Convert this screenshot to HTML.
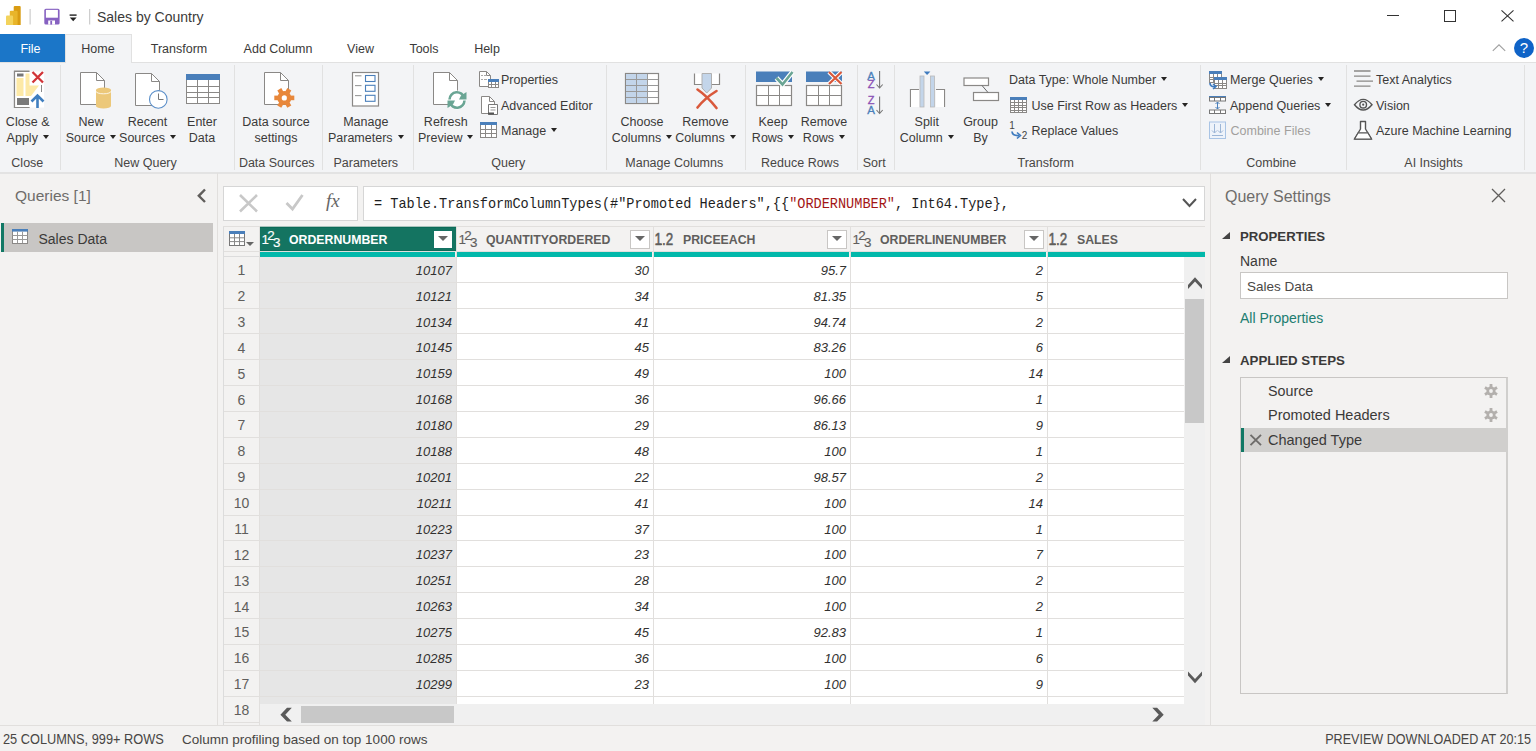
<!DOCTYPE html>
<html><head><meta charset="utf-8"><title>Power Query Editor</title>
<style>
html,body{margin:0;padding:0;width:1536px;height:751px;overflow:hidden;background:#fff;}
body{position:relative;font-family:"Liberation Sans",sans-serif;}
.t{position:absolute;white-space:nowrap;}
.b{position:absolute;display:block;}
.ar{display:inline-block;width:0;height:0;border-left:3.5px solid transparent;border-right:3.5px solid transparent;border-top:4px solid #252423;margin-left:5px;vertical-align:3px;}
</style></head><body>
<div class="b" style="left:0px;top:0px;width:1536px;height:34px;background:#ffffff;"></div>
<svg class="b" style="left:0;top:0" width="100" height="34" viewBox="0 0 100 34"><path d="M13.7 7Q13.7 5.9 14.8 5.9H19.6Q20.7 5.9 20.7 7V25H13.7Z" fill="#d99c12"/><path d="M9.8 11.8Q9.8 10.7 10.9 10.7H16.5Q17.6 10.7 17.6 11.8V25H9.8Z" fill="#e8b52a"/><path d="M6 16.7Q6 15.6 7.1 15.6H12Q13.1 15.6 13.1 16.7V25H6Z" fill="#f3d35c"/><rect x="29.6" y="9" width="1" height="15.5" fill="#c2c2c2"/><rect x="89.2" y="9" width="1" height="15.5" fill="#c2c2c2"/><rect x="44.3" y="8.8" width="15.3" height="15.8" rx="1.6" fill="#8661c1"/><rect x="45.9" y="9.9" width="12" height="7.8" fill="#fff"/><rect x="48.2" y="20.5" width="6.8" height="4.1" fill="#fff"/><rect x="50.3" y="20.8" width="1.8" height="3.8" fill="#8661c1"/><rect x="69.6" y="14.4" width="7" height="1.4" fill="#222"/><path d="M69.8 17.6H76.6L73.2 21.2Z" fill="#222"/></svg>
<div class="t" style="left:97px;top:10.15px;font-size:14px;line-height:14px;color:#3b3a39;font-weight:normal;font-style:normal;font-family:'Liberation Sans', sans-serif;">Sales by Country</div>
<div class="b" style="left:1387px;top:15px;width:12px;height:1px;background:#333;"></div>
<div class="b" style="left:1444px;top:10px;width:12px;height:12px;background:transparent;border:1px solid #333;box-sizing:border-box;"></div>
<svg class="b" style="left:1500px;top:9px;" width="15" height="14" viewBox="0 0 15 14"><path d="M1.5 1.4L13.5 12.4M13.5 1.4L1.5 12.4" stroke="#333" stroke-width="1.1"/></svg>
<div class="b" style="left:0px;top:34px;width:1536px;height:28px;background:#ffffff;"></div>
<div class="b" style="left:0px;top:34px;width:65px;height:28px;background:#1b76c8;"></div>
<div class="t" style="left:-221px;width:800px;text-align:center;top:42.72px;font-size:12.5px;line-height:12.5px;color:#3b3a39;font-weight:normal;font-style:normal;font-family:'Liberation Sans', sans-serif;">Transform</div>
<div class="t" style="left:-122px;width:800px;text-align:center;top:42.72px;font-size:12.5px;line-height:12.5px;color:#3b3a39;font-weight:normal;font-style:normal;font-family:'Liberation Sans', sans-serif;">Add Column</div>
<div class="t" style="left:-39.5px;width:800px;text-align:center;top:42.72px;font-size:12.5px;line-height:12.5px;color:#3b3a39;font-weight:normal;font-style:normal;font-family:'Liberation Sans', sans-serif;">View</div>
<div class="t" style="left:24px;width:800px;text-align:center;top:42.72px;font-size:12.5px;line-height:12.5px;color:#3b3a39;font-weight:normal;font-style:normal;font-family:'Liberation Sans', sans-serif;">Tools</div>
<div class="t" style="left:87px;width:800px;text-align:center;top:42.72px;font-size:12.5px;line-height:12.5px;color:#3b3a39;font-weight:normal;font-style:normal;font-family:'Liberation Sans', sans-serif;">Help</div>
<svg class="b" style="left:1491px;top:42px;" width="16" height="10" viewBox="0 0 16 10"><path d="M1.8 8.8L8 2.8L14.2 8.8" stroke="#a0a0a0" stroke-width="1.1" fill="none"/></svg>
<svg class="b" style="left:1513px;top:37px;" width="22" height="22" viewBox="0 0 22 22"><circle cx="11" cy="11" r="10" fill="#0f63c7"/><text x="11" y="16" text-anchor="middle" font-family="Liberation Sans" font-size="15" fill="#fff">?</text></svg>
<div class="b" style="left:0px;top:62px;width:1536px;height:1px;background:#e1e1e1;"></div>
<div class="b" style="left:0px;top:63px;width:1536px;height:110px;background:#f3f4f6;"></div>
<div class="b" style="left:65px;top:34px;width:67px;height:29px;background:#f3f4f6;border:1px solid #e1e1e1;border-bottom:none;box-sizing:border-box;"></div>
<div class="b" style="left:0px;top:34px;width:65px;height:28px;background:#1b76c8;"></div>
<div class="t" style="left:-369.5px;width:800px;text-align:center;top:42.72px;font-size:12.5px;line-height:12.5px;color:#ffffff;font-weight:normal;font-style:normal;font-family:'Liberation Sans', sans-serif;">File</div>
<div class="t" style="left:-302px;width:800px;text-align:center;top:42.72px;font-size:12.5px;line-height:12.5px;color:#3b3a39;font-weight:normal;font-style:normal;font-family:'Liberation Sans', sans-serif;">Home</div>
<div class="b" style="left:0px;top:172px;width:1536px;height:2px;background:#e3e3e3;"></div>
<div class="b" style="left:60px;top:65px;width:1px;height:105px;background:#e1e1e1;"></div>
<div class="b" style="left:234px;top:65px;width:1px;height:105px;background:#e1e1e1;"></div>
<div class="b" style="left:322px;top:65px;width:1px;height:105px;background:#e1e1e1;"></div>
<div class="b" style="left:413px;top:65px;width:1px;height:105px;background:#e1e1e1;"></div>
<div class="b" style="left:606px;top:65px;width:1px;height:105px;background:#e1e1e1;"></div>
<div class="b" style="left:745px;top:65px;width:1px;height:105px;background:#e1e1e1;"></div>
<div class="b" style="left:857px;top:65px;width:1px;height:105px;background:#e1e1e1;"></div>
<div class="b" style="left:894px;top:65px;width:1px;height:105px;background:#e1e1e1;"></div>
<div class="b" style="left:1200px;top:65px;width:1px;height:105px;background:#e1e1e1;"></div>
<div class="b" style="left:1346px;top:65px;width:1px;height:105px;background:#e1e1e1;"></div>
<div class="b" style="left:1524px;top:65px;width:1px;height:105px;background:#e1e1e1;"></div>
<div class="t" style="left:-372.25px;width:800px;text-align:center;top:115.62px;font-size:12.5px;line-height:12.5px;color:#3b3a39;font-weight:normal;font-style:normal;font-family:'Liberation Sans', sans-serif;">Close &amp;</div>
<div class="t" style="left:-372.25px;width:800px;text-align:center;top:132.32px;font-size:12.5px;line-height:12.5px;color:#3b3a39;font-weight:normal;font-style:normal;font-family:'Liberation Sans', sans-serif;">Apply<span class="ar"></span></div>
<div class="t" style="left:-309px;width:800px;text-align:center;top:115.62px;font-size:12.5px;line-height:12.5px;color:#3b3a39;font-weight:normal;font-style:normal;font-family:'Liberation Sans', sans-serif;">New</div>
<div class="t" style="left:-309px;width:800px;text-align:center;top:132.32px;font-size:12.5px;line-height:12.5px;color:#3b3a39;font-weight:normal;font-style:normal;font-family:'Liberation Sans', sans-serif;">Source<span class="ar"></span></div>
<div class="t" style="left:-252.5px;width:800px;text-align:center;top:115.62px;font-size:12.5px;line-height:12.5px;color:#3b3a39;font-weight:normal;font-style:normal;font-family:'Liberation Sans', sans-serif;">Recent</div>
<div class="t" style="left:-252.5px;width:800px;text-align:center;top:132.32px;font-size:12.5px;line-height:12.5px;color:#3b3a39;font-weight:normal;font-style:normal;font-family:'Liberation Sans', sans-serif;">Sources<span class="ar"></span></div>
<div class="t" style="left:-198px;width:800px;text-align:center;top:115.62px;font-size:12.5px;line-height:12.5px;color:#3b3a39;font-weight:normal;font-style:normal;font-family:'Liberation Sans', sans-serif;">Enter</div>
<div class="t" style="left:-198px;width:800px;text-align:center;top:132.32px;font-size:12.5px;line-height:12.5px;color:#3b3a39;font-weight:normal;font-style:normal;font-family:'Liberation Sans', sans-serif;">Data</div>
<div class="t" style="left:-124px;width:800px;text-align:center;top:115.62px;font-size:12.5px;line-height:12.5px;color:#3b3a39;font-weight:normal;font-style:normal;font-family:'Liberation Sans', sans-serif;">Data source</div>
<div class="t" style="left:-124px;width:800px;text-align:center;top:132.32px;font-size:12.5px;line-height:12.5px;color:#3b3a39;font-weight:normal;font-style:normal;font-family:'Liberation Sans', sans-serif;">settings</div>
<div class="t" style="left:-34.25px;width:800px;text-align:center;top:115.62px;font-size:12.5px;line-height:12.5px;color:#3b3a39;font-weight:normal;font-style:normal;font-family:'Liberation Sans', sans-serif;">Manage</div>
<div class="t" style="left:-34.25px;width:800px;text-align:center;top:132.32px;font-size:12.5px;line-height:12.5px;color:#3b3a39;font-weight:normal;font-style:normal;font-family:'Liberation Sans', sans-serif;">Parameters<span class="ar"></span></div>
<div class="t" style="left:45.75px;width:800px;text-align:center;top:115.62px;font-size:12.5px;line-height:12.5px;color:#3b3a39;font-weight:normal;font-style:normal;font-family:'Liberation Sans', sans-serif;">Refresh</div>
<div class="t" style="left:45.75px;width:800px;text-align:center;top:132.32px;font-size:12.5px;line-height:12.5px;color:#3b3a39;font-weight:normal;font-style:normal;font-family:'Liberation Sans', sans-serif;">Preview<span class="ar"></span></div>
<div class="t" style="left:242px;width:800px;text-align:center;top:115.62px;font-size:12.5px;line-height:12.5px;color:#3b3a39;font-weight:normal;font-style:normal;font-family:'Liberation Sans', sans-serif;">Choose</div>
<div class="t" style="left:242px;width:800px;text-align:center;top:132.32px;font-size:12.5px;line-height:12.5px;color:#3b3a39;font-weight:normal;font-style:normal;font-family:'Liberation Sans', sans-serif;">Columns<span class="ar"></span></div>
<div class="t" style="left:305.5px;width:800px;text-align:center;top:115.62px;font-size:12.5px;line-height:12.5px;color:#3b3a39;font-weight:normal;font-style:normal;font-family:'Liberation Sans', sans-serif;">Remove</div>
<div class="t" style="left:305.5px;width:800px;text-align:center;top:132.32px;font-size:12.5px;line-height:12.5px;color:#3b3a39;font-weight:normal;font-style:normal;font-family:'Liberation Sans', sans-serif;">Columns<span class="ar"></span></div>
<div class="t" style="left:373px;width:800px;text-align:center;top:115.62px;font-size:12.5px;line-height:12.5px;color:#3b3a39;font-weight:normal;font-style:normal;font-family:'Liberation Sans', sans-serif;">Keep</div>
<div class="t" style="left:373px;width:800px;text-align:center;top:132.32px;font-size:12.5px;line-height:12.5px;color:#3b3a39;font-weight:normal;font-style:normal;font-family:'Liberation Sans', sans-serif;">Rows<span class="ar"></span></div>
<div class="t" style="left:424px;width:800px;text-align:center;top:115.62px;font-size:12.5px;line-height:12.5px;color:#3b3a39;font-weight:normal;font-style:normal;font-family:'Liberation Sans', sans-serif;">Remove</div>
<div class="t" style="left:424px;width:800px;text-align:center;top:132.32px;font-size:12.5px;line-height:12.5px;color:#3b3a39;font-weight:normal;font-style:normal;font-family:'Liberation Sans', sans-serif;">Rows<span class="ar"></span></div>
<div class="t" style="left:526.75px;width:800px;text-align:center;top:115.62px;font-size:12.5px;line-height:12.5px;color:#3b3a39;font-weight:normal;font-style:normal;font-family:'Liberation Sans', sans-serif;">Split</div>
<div class="t" style="left:526.75px;width:800px;text-align:center;top:132.32px;font-size:12.5px;line-height:12.5px;color:#3b3a39;font-weight:normal;font-style:normal;font-family:'Liberation Sans', sans-serif;">Column<span class="ar"></span></div>
<div class="t" style="left:580.5px;width:800px;text-align:center;top:115.62px;font-size:12.5px;line-height:12.5px;color:#3b3a39;font-weight:normal;font-style:normal;font-family:'Liberation Sans', sans-serif;">Group</div>
<div class="t" style="left:580.5px;width:800px;text-align:center;top:132.32px;font-size:12.5px;line-height:12.5px;color:#3b3a39;font-weight:normal;font-style:normal;font-family:'Liberation Sans', sans-serif;">By</div>
<div class="t" style="left:-372.7px;width:800px;text-align:center;top:156.62px;font-size:12.5px;line-height:12.5px;color:#484644;font-weight:normal;font-style:normal;font-family:'Liberation Sans', sans-serif;">Close</div>
<div class="t" style="left:-254.5px;width:800px;text-align:center;top:156.62px;font-size:12.5px;line-height:12.5px;color:#484644;font-weight:normal;font-style:normal;font-family:'Liberation Sans', sans-serif;">New Query</div>
<div class="t" style="left:-123.25px;width:800px;text-align:center;top:156.62px;font-size:12.5px;line-height:12.5px;color:#484644;font-weight:normal;font-style:normal;font-family:'Liberation Sans', sans-serif;">Data Sources</div>
<div class="t" style="left:-34.25px;width:800px;text-align:center;top:156.62px;font-size:12.5px;line-height:12.5px;color:#484644;font-weight:normal;font-style:normal;font-family:'Liberation Sans', sans-serif;">Parameters</div>
<div class="t" style="left:108.25px;width:800px;text-align:center;top:156.62px;font-size:12.5px;line-height:12.5px;color:#484644;font-weight:normal;font-style:normal;font-family:'Liberation Sans', sans-serif;">Query</div>
<div class="t" style="left:274.25px;width:800px;text-align:center;top:156.62px;font-size:12.5px;line-height:12.5px;color:#484644;font-weight:normal;font-style:normal;font-family:'Liberation Sans', sans-serif;">Manage Columns</div>
<div class="t" style="left:400px;width:800px;text-align:center;top:156.62px;font-size:12.5px;line-height:12.5px;color:#484644;font-weight:normal;font-style:normal;font-family:'Liberation Sans', sans-serif;">Reduce Rows</div>
<div class="t" style="left:474.25px;width:800px;text-align:center;top:156.62px;font-size:12.5px;line-height:12.5px;color:#484644;font-weight:normal;font-style:normal;font-family:'Liberation Sans', sans-serif;">Sort</div>
<div class="t" style="left:645.75px;width:800px;text-align:center;top:156.62px;font-size:12.5px;line-height:12.5px;color:#484644;font-weight:normal;font-style:normal;font-family:'Liberation Sans', sans-serif;">Transform</div>
<div class="t" style="left:871.25px;width:800px;text-align:center;top:156.62px;font-size:12.5px;line-height:12.5px;color:#484644;font-weight:normal;font-style:normal;font-family:'Liberation Sans', sans-serif;">Combine</div>
<div class="t" style="left:1033.5px;width:800px;text-align:center;top:156.62px;font-size:12.5px;line-height:12.5px;color:#484644;font-weight:normal;font-style:normal;font-family:'Liberation Sans', sans-serif;">AI Insights</div>
<div class="t" style="left:501px;top:74.22px;font-size:12.5px;line-height:12.5px;color:#3b3a39;font-weight:normal;font-style:normal;font-family:'Liberation Sans', sans-serif;">Properties</div>
<div class="t" style="left:501px;top:99.82px;font-size:12.5px;line-height:12.5px;color:#3b3a39;font-weight:normal;font-style:normal;font-family:'Liberation Sans', sans-serif;">Advanced Editor</div>
<div class="t" style="left:501px;top:125.02px;font-size:12.5px;line-height:12.5px;color:#3b3a39;font-weight:normal;font-style:normal;font-family:'Liberation Sans', sans-serif;">Manage<span class="ar"></span></div>
<div class="t" style="left:1009px;top:74.22px;font-size:12.5px;line-height:12.5px;color:#3b3a39;font-weight:normal;font-style:normal;font-family:'Liberation Sans', sans-serif;">Data Type: Whole Number<span class="ar"></span></div>
<div class="t" style="left:1031.5px;top:99.82px;font-size:12.5px;line-height:12.5px;color:#3b3a39;font-weight:normal;font-style:normal;font-family:'Liberation Sans', sans-serif;">Use First Row as Headers<span class="ar"></span></div>
<div class="t" style="left:1031.5px;top:125.02px;font-size:12.5px;line-height:12.5px;color:#3b3a39;font-weight:normal;font-style:normal;font-family:'Liberation Sans', sans-serif;">Replace Values</div>
<div class="t" style="left:1230px;top:74.22px;font-size:12.5px;line-height:12.5px;color:#3b3a39;font-weight:normal;font-style:normal;font-family:'Liberation Sans', sans-serif;">Merge Queries<span class="ar"></span></div>
<div class="t" style="left:1230px;top:99.82px;font-size:12.5px;line-height:12.5px;color:#3b3a39;font-weight:normal;font-style:normal;font-family:'Liberation Sans', sans-serif;">Append Queries<span class="ar"></span></div>
<div class="t" style="left:1230.5px;top:125.02px;font-size:12.5px;line-height:12.5px;color:#a19f9d;font-weight:normal;font-style:normal;font-family:'Liberation Sans', sans-serif;">Combine Files</div>
<div class="t" style="left:1376px;top:74.22px;font-size:12.5px;line-height:12.5px;color:#3b3a39;font-weight:normal;font-style:normal;font-family:'Liberation Sans', sans-serif;">Text Analytics</div>
<div class="t" style="left:1376px;top:99.82px;font-size:12.5px;line-height:12.5px;color:#3b3a39;font-weight:normal;font-style:normal;font-family:'Liberation Sans', sans-serif;">Vision</div>
<div class="t" style="left:1376px;top:125.02px;font-size:12.5px;line-height:12.5px;color:#3b3a39;font-weight:normal;font-style:normal;font-family:'Liberation Sans', sans-serif;">Azure Machine Learning</div>
<div class="b" style="left:0px;top:174px;width:1536px;height:552px;background:#f3f2f1;"></div>
<div class="t" style="left:15px;top:188.28px;font-size:15.5px;line-height:15.5px;color:#6e6c6a;font-weight:normal;font-style:normal;font-family:'Liberation Sans', sans-serif;">Queries [1]</div>
<svg class="b" style="left:195px;top:188px;" width="13" height="16" viewBox="0 0 13 16"><path d="M10 1.5L3.8 7.8L10 14" stroke="#605e5c" stroke-width="2.4" fill="none"/></svg>
<div class="b" style="left:1px;top:222.5px;width:212px;height:29.5px;background:#c8c6c4;"></div>
<div class="b" style="left:1px;top:222.5px;width:3px;height:29.5px;background:#117865;"></div>
<div class="t" style="left:38.5px;top:232.15px;font-size:14px;line-height:14px;color:#3b3a39;font-weight:normal;font-style:normal;font-family:'Liberation Sans', sans-serif;">Sales Data</div>
<svg class="b" style="left:11px;top:228px" width="18" height="17" viewBox="0 0 18 17"><rect x="1.5" y="1.5" width="15" height="14" fill="#fff" stroke="#8a8886" stroke-width="1"/><rect x="1" y="1" width="16" height="2.6" fill="#4a7fba"/><path d="M6.5 3.6V15M11.5 3.6V15M1.5 7.5H16.5M1.5 11.5H16.5" stroke="#999" stroke-width="1"/></svg>
<div class="b" style="left:217px;top:173px;width:1px;height:553px;background:#e1dfdd;"></div>
<div class="b" style="left:223px;top:186px;width:135px;height:35px;background:#fff;border:1px solid #d6d6d6;box-sizing:border-box;"></div>
<div class="b" style="left:363px;top:186px;width:842px;height:35px;background:#fff;border:1px solid #d6d6d6;box-sizing:border-box;"></div>
<svg class="b" style="left:236px;top:191px;" width="24" height="24" viewBox="0 0 24 24"><path d="M4 4L21 20.5M21 4L4 20.5" stroke="#c8c8c8" stroke-width="2.6"/></svg>
<svg class="b" style="left:283px;top:191px;" width="24" height="22" viewBox="0 0 24 22"><path d="M3.5 12L9.5 18L19.5 4" stroke="#c8c8c8" stroke-width="2.8" fill="none"/></svg>
<div class="t" style="left:326px;top:191.42px;font-size:19px;line-height:19px;color:#666;font-weight:normal;font-style:normal;font-family:'Liberation Serif', serif;"><i>fx</i></div>
<div class="t" style="left:373.5px;top:195.9px;font-family:'Liberation Mono',monospace;font-size:14.8px;line-height:16px;color:#1e1e1e;transform:scaleX(0.9167);transform-origin:0 0;">= Table.TransformColumnTypes(#"Promoted Headers",{{<span style="color:#a31515">"ORDERNUMBER"</span>, Int64.Type},</div>
<svg class="b" style="left:1181px;top:197px;" width="17" height="12" viewBox="0 0 17 12"><path d="M2 2L8.5 9L15 2" stroke="#555" stroke-width="2" fill="none"/></svg>
<div class="b" style="left:223px;top:226px;width:982px;height:499px;background:#ffffff;"></div>
<div class="b" style="left:223px;top:226px;width:982px;height:31px;background:#f3f2f1;"></div>
<div class="b" style="left:223px;top:226px;width:1px;height:499px;background:#dcdcdc;"></div>
<div class="b" style="left:223px;top:226px;width:982px;height:1px;background:#e1dfdd;"></div>
<div class="b" style="left:224px;top:257px;width:35px;height:468px;background:#f3f2f1;"></div>
<div class="b" style="left:260px;top:227px;width:196px;height:24px;background:#147461;border-top:1px solid #0c6b58;border-bottom:1px solid #0c6b58;box-sizing:border-box;"></div>
<div class="b" style="left:260px;top:226px;width:196px;height:1px;background:#a9c4bd;"></div>
<div class="b" style="left:224px;top:251px;width:981px;height:1px;background:#e1dfdd;"></div>
<div class="b" style="left:260px;top:252px;width:195px;height:5px;background:#01b8aa;"></div>
<div class="b" style="left:457px;top:252px;width:195px;height:5px;background:#01b8aa;"></div>
<div class="b" style="left:654px;top:252px;width:195px;height:5px;background:#01b8aa;"></div>
<div class="b" style="left:851px;top:252px;width:195px;height:5px;background:#01b8aa;"></div>
<div class="b" style="left:1048px;top:252px;width:157px;height:5px;background:#01b8aa;"></div>
<div class="b" style="left:224px;top:256px;width:35px;height:1px;background:#dcdcdc;"></div>
<div class="b" style="left:260px;top:257px;width:196px;height:468px;background:#e6e6e6;"></div>
<div class="b" style="left:224px;top:282px;width:981px;height:1px;background:#e1dfdd;"></div>
<div class="t" style="left:-158.5px;width:800px;text-align:center;top:263.15px;font-size:14px;line-height:14px;color:#605e5c;font-weight:normal;font-style:normal;font-family:'Liberation Sans', sans-serif;">1</div>
<div class="t" style="left:-348px;width:800px;text-align:right;top:263.80px;font-size:13px;line-height:13px;color:#323130;font-weight:normal;font-style:italic;font-family:'Liberation Sans', sans-serif;">10107</div>
<div class="t" style="left:-151px;width:800px;text-align:right;top:263.80px;font-size:13px;line-height:13px;color:#323130;font-weight:normal;font-style:italic;font-family:'Liberation Sans', sans-serif;">30</div>
<div class="t" style="left:46px;width:800px;text-align:right;top:263.80px;font-size:13px;line-height:13px;color:#323130;font-weight:normal;font-style:italic;font-family:'Liberation Sans', sans-serif;">95.7</div>
<div class="t" style="left:243px;width:800px;text-align:right;top:263.80px;font-size:13px;line-height:13px;color:#323130;font-weight:normal;font-style:italic;font-family:'Liberation Sans', sans-serif;">2</div>
<div class="b" style="left:224px;top:308px;width:981px;height:1px;background:#e1dfdd;"></div>
<div class="t" style="left:-158.5px;width:800px;text-align:center;top:289.02px;font-size:14px;line-height:14px;color:#605e5c;font-weight:normal;font-style:normal;font-family:'Liberation Sans', sans-serif;">2</div>
<div class="t" style="left:-348px;width:800px;text-align:right;top:289.67px;font-size:13px;line-height:13px;color:#323130;font-weight:normal;font-style:italic;font-family:'Liberation Sans', sans-serif;">10121</div>
<div class="t" style="left:-151px;width:800px;text-align:right;top:289.67px;font-size:13px;line-height:13px;color:#323130;font-weight:normal;font-style:italic;font-family:'Liberation Sans', sans-serif;">34</div>
<div class="t" style="left:46px;width:800px;text-align:right;top:289.67px;font-size:13px;line-height:13px;color:#323130;font-weight:normal;font-style:italic;font-family:'Liberation Sans', sans-serif;">81.35</div>
<div class="t" style="left:243px;width:800px;text-align:right;top:289.67px;font-size:13px;line-height:13px;color:#323130;font-weight:normal;font-style:italic;font-family:'Liberation Sans', sans-serif;">5</div>
<div class="b" style="left:224px;top:333px;width:981px;height:1px;background:#e1dfdd;"></div>
<div class="t" style="left:-158.5px;width:800px;text-align:center;top:314.90px;font-size:14px;line-height:14px;color:#605e5c;font-weight:normal;font-style:normal;font-family:'Liberation Sans', sans-serif;">3</div>
<div class="t" style="left:-348px;width:800px;text-align:right;top:315.55px;font-size:13px;line-height:13px;color:#323130;font-weight:normal;font-style:italic;font-family:'Liberation Sans', sans-serif;">10134</div>
<div class="t" style="left:-151px;width:800px;text-align:right;top:315.55px;font-size:13px;line-height:13px;color:#323130;font-weight:normal;font-style:italic;font-family:'Liberation Sans', sans-serif;">41</div>
<div class="t" style="left:46px;width:800px;text-align:right;top:315.55px;font-size:13px;line-height:13px;color:#323130;font-weight:normal;font-style:italic;font-family:'Liberation Sans', sans-serif;">94.74</div>
<div class="t" style="left:243px;width:800px;text-align:right;top:315.55px;font-size:13px;line-height:13px;color:#323130;font-weight:normal;font-style:italic;font-family:'Liberation Sans', sans-serif;">2</div>
<div class="b" style="left:224px;top:359px;width:981px;height:1px;background:#e1dfdd;"></div>
<div class="t" style="left:-158.5px;width:800px;text-align:center;top:340.77px;font-size:14px;line-height:14px;color:#605e5c;font-weight:normal;font-style:normal;font-family:'Liberation Sans', sans-serif;">4</div>
<div class="t" style="left:-348px;width:800px;text-align:right;top:341.42px;font-size:13px;line-height:13px;color:#323130;font-weight:normal;font-style:italic;font-family:'Liberation Sans', sans-serif;">10145</div>
<div class="t" style="left:-151px;width:800px;text-align:right;top:341.42px;font-size:13px;line-height:13px;color:#323130;font-weight:normal;font-style:italic;font-family:'Liberation Sans', sans-serif;">45</div>
<div class="t" style="left:46px;width:800px;text-align:right;top:341.42px;font-size:13px;line-height:13px;color:#323130;font-weight:normal;font-style:italic;font-family:'Liberation Sans', sans-serif;">83.26</div>
<div class="t" style="left:243px;width:800px;text-align:right;top:341.42px;font-size:13px;line-height:13px;color:#323130;font-weight:normal;font-style:italic;font-family:'Liberation Sans', sans-serif;">6</div>
<div class="b" style="left:224px;top:385px;width:981px;height:1px;background:#e1dfdd;"></div>
<div class="t" style="left:-158.5px;width:800px;text-align:center;top:366.65px;font-size:14px;line-height:14px;color:#605e5c;font-weight:normal;font-style:normal;font-family:'Liberation Sans', sans-serif;">5</div>
<div class="t" style="left:-348px;width:800px;text-align:right;top:367.30px;font-size:13px;line-height:13px;color:#323130;font-weight:normal;font-style:italic;font-family:'Liberation Sans', sans-serif;">10159</div>
<div class="t" style="left:-151px;width:800px;text-align:right;top:367.30px;font-size:13px;line-height:13px;color:#323130;font-weight:normal;font-style:italic;font-family:'Liberation Sans', sans-serif;">49</div>
<div class="t" style="left:46px;width:800px;text-align:right;top:367.30px;font-size:13px;line-height:13px;color:#323130;font-weight:normal;font-style:italic;font-family:'Liberation Sans', sans-serif;">100</div>
<div class="t" style="left:243px;width:800px;text-align:right;top:367.30px;font-size:13px;line-height:13px;color:#323130;font-weight:normal;font-style:italic;font-family:'Liberation Sans', sans-serif;">14</div>
<div class="b" style="left:224px;top:411px;width:981px;height:1px;background:#e1dfdd;"></div>
<div class="t" style="left:-158.5px;width:800px;text-align:center;top:392.52px;font-size:14px;line-height:14px;color:#605e5c;font-weight:normal;font-style:normal;font-family:'Liberation Sans', sans-serif;">6</div>
<div class="t" style="left:-348px;width:800px;text-align:right;top:393.17px;font-size:13px;line-height:13px;color:#323130;font-weight:normal;font-style:italic;font-family:'Liberation Sans', sans-serif;">10168</div>
<div class="t" style="left:-151px;width:800px;text-align:right;top:393.17px;font-size:13px;line-height:13px;color:#323130;font-weight:normal;font-style:italic;font-family:'Liberation Sans', sans-serif;">36</div>
<div class="t" style="left:46px;width:800px;text-align:right;top:393.17px;font-size:13px;line-height:13px;color:#323130;font-weight:normal;font-style:italic;font-family:'Liberation Sans', sans-serif;">96.66</div>
<div class="t" style="left:243px;width:800px;text-align:right;top:393.17px;font-size:13px;line-height:13px;color:#323130;font-weight:normal;font-style:italic;font-family:'Liberation Sans', sans-serif;">1</div>
<div class="b" style="left:224px;top:437px;width:981px;height:1px;background:#e1dfdd;"></div>
<div class="t" style="left:-158.5px;width:800px;text-align:center;top:418.40px;font-size:14px;line-height:14px;color:#605e5c;font-weight:normal;font-style:normal;font-family:'Liberation Sans', sans-serif;">7</div>
<div class="t" style="left:-348px;width:800px;text-align:right;top:419.05px;font-size:13px;line-height:13px;color:#323130;font-weight:normal;font-style:italic;font-family:'Liberation Sans', sans-serif;">10180</div>
<div class="t" style="left:-151px;width:800px;text-align:right;top:419.05px;font-size:13px;line-height:13px;color:#323130;font-weight:normal;font-style:italic;font-family:'Liberation Sans', sans-serif;">29</div>
<div class="t" style="left:46px;width:800px;text-align:right;top:419.05px;font-size:13px;line-height:13px;color:#323130;font-weight:normal;font-style:italic;font-family:'Liberation Sans', sans-serif;">86.13</div>
<div class="t" style="left:243px;width:800px;text-align:right;top:419.05px;font-size:13px;line-height:13px;color:#323130;font-weight:normal;font-style:italic;font-family:'Liberation Sans', sans-serif;">9</div>
<div class="b" style="left:224px;top:463px;width:981px;height:1px;background:#e1dfdd;"></div>
<div class="t" style="left:-158.5px;width:800px;text-align:center;top:444.27px;font-size:14px;line-height:14px;color:#605e5c;font-weight:normal;font-style:normal;font-family:'Liberation Sans', sans-serif;">8</div>
<div class="t" style="left:-348px;width:800px;text-align:right;top:444.92px;font-size:13px;line-height:13px;color:#323130;font-weight:normal;font-style:italic;font-family:'Liberation Sans', sans-serif;">10188</div>
<div class="t" style="left:-151px;width:800px;text-align:right;top:444.92px;font-size:13px;line-height:13px;color:#323130;font-weight:normal;font-style:italic;font-family:'Liberation Sans', sans-serif;">48</div>
<div class="t" style="left:46px;width:800px;text-align:right;top:444.92px;font-size:13px;line-height:13px;color:#323130;font-weight:normal;font-style:italic;font-family:'Liberation Sans', sans-serif;">100</div>
<div class="t" style="left:243px;width:800px;text-align:right;top:444.92px;font-size:13px;line-height:13px;color:#323130;font-weight:normal;font-style:italic;font-family:'Liberation Sans', sans-serif;">1</div>
<div class="b" style="left:224px;top:489px;width:981px;height:1px;background:#e1dfdd;"></div>
<div class="t" style="left:-158.5px;width:800px;text-align:center;top:470.15px;font-size:14px;line-height:14px;color:#605e5c;font-weight:normal;font-style:normal;font-family:'Liberation Sans', sans-serif;">9</div>
<div class="t" style="left:-348px;width:800px;text-align:right;top:470.80px;font-size:13px;line-height:13px;color:#323130;font-weight:normal;font-style:italic;font-family:'Liberation Sans', sans-serif;">10201</div>
<div class="t" style="left:-151px;width:800px;text-align:right;top:470.80px;font-size:13px;line-height:13px;color:#323130;font-weight:normal;font-style:italic;font-family:'Liberation Sans', sans-serif;">22</div>
<div class="t" style="left:46px;width:800px;text-align:right;top:470.80px;font-size:13px;line-height:13px;color:#323130;font-weight:normal;font-style:italic;font-family:'Liberation Sans', sans-serif;">98.57</div>
<div class="t" style="left:243px;width:800px;text-align:right;top:470.80px;font-size:13px;line-height:13px;color:#323130;font-weight:normal;font-style:italic;font-family:'Liberation Sans', sans-serif;">2</div>
<div class="b" style="left:224px;top:515px;width:981px;height:1px;background:#e1dfdd;"></div>
<div class="t" style="left:-158.5px;width:800px;text-align:center;top:496.02px;font-size:14px;line-height:14px;color:#605e5c;font-weight:normal;font-style:normal;font-family:'Liberation Sans', sans-serif;">10</div>
<div class="t" style="left:-348px;width:800px;text-align:right;top:496.67px;font-size:13px;line-height:13px;color:#323130;font-weight:normal;font-style:italic;font-family:'Liberation Sans', sans-serif;">10211</div>
<div class="t" style="left:-151px;width:800px;text-align:right;top:496.67px;font-size:13px;line-height:13px;color:#323130;font-weight:normal;font-style:italic;font-family:'Liberation Sans', sans-serif;">41</div>
<div class="t" style="left:46px;width:800px;text-align:right;top:496.67px;font-size:13px;line-height:13px;color:#323130;font-weight:normal;font-style:italic;font-family:'Liberation Sans', sans-serif;">100</div>
<div class="t" style="left:243px;width:800px;text-align:right;top:496.67px;font-size:13px;line-height:13px;color:#323130;font-weight:normal;font-style:italic;font-family:'Liberation Sans', sans-serif;">14</div>
<div class="b" style="left:224px;top:540px;width:981px;height:1px;background:#e1dfdd;"></div>
<div class="t" style="left:-158.5px;width:800px;text-align:center;top:521.90px;font-size:14px;line-height:14px;color:#605e5c;font-weight:normal;font-style:normal;font-family:'Liberation Sans', sans-serif;">11</div>
<div class="t" style="left:-348px;width:800px;text-align:right;top:522.55px;font-size:13px;line-height:13px;color:#323130;font-weight:normal;font-style:italic;font-family:'Liberation Sans', sans-serif;">10223</div>
<div class="t" style="left:-151px;width:800px;text-align:right;top:522.55px;font-size:13px;line-height:13px;color:#323130;font-weight:normal;font-style:italic;font-family:'Liberation Sans', sans-serif;">37</div>
<div class="t" style="left:46px;width:800px;text-align:right;top:522.55px;font-size:13px;line-height:13px;color:#323130;font-weight:normal;font-style:italic;font-family:'Liberation Sans', sans-serif;">100</div>
<div class="t" style="left:243px;width:800px;text-align:right;top:522.55px;font-size:13px;line-height:13px;color:#323130;font-weight:normal;font-style:italic;font-family:'Liberation Sans', sans-serif;">1</div>
<div class="b" style="left:224px;top:566px;width:981px;height:1px;background:#e1dfdd;"></div>
<div class="t" style="left:-158.5px;width:800px;text-align:center;top:547.77px;font-size:14px;line-height:14px;color:#605e5c;font-weight:normal;font-style:normal;font-family:'Liberation Sans', sans-serif;">12</div>
<div class="t" style="left:-348px;width:800px;text-align:right;top:548.42px;font-size:13px;line-height:13px;color:#323130;font-weight:normal;font-style:italic;font-family:'Liberation Sans', sans-serif;">10237</div>
<div class="t" style="left:-151px;width:800px;text-align:right;top:548.42px;font-size:13px;line-height:13px;color:#323130;font-weight:normal;font-style:italic;font-family:'Liberation Sans', sans-serif;">23</div>
<div class="t" style="left:46px;width:800px;text-align:right;top:548.42px;font-size:13px;line-height:13px;color:#323130;font-weight:normal;font-style:italic;font-family:'Liberation Sans', sans-serif;">100</div>
<div class="t" style="left:243px;width:800px;text-align:right;top:548.42px;font-size:13px;line-height:13px;color:#323130;font-weight:normal;font-style:italic;font-family:'Liberation Sans', sans-serif;">7</div>
<div class="b" style="left:224px;top:592px;width:981px;height:1px;background:#e1dfdd;"></div>
<div class="t" style="left:-158.5px;width:800px;text-align:center;top:573.65px;font-size:14px;line-height:14px;color:#605e5c;font-weight:normal;font-style:normal;font-family:'Liberation Sans', sans-serif;">13</div>
<div class="t" style="left:-348px;width:800px;text-align:right;top:574.30px;font-size:13px;line-height:13px;color:#323130;font-weight:normal;font-style:italic;font-family:'Liberation Sans', sans-serif;">10251</div>
<div class="t" style="left:-151px;width:800px;text-align:right;top:574.30px;font-size:13px;line-height:13px;color:#323130;font-weight:normal;font-style:italic;font-family:'Liberation Sans', sans-serif;">28</div>
<div class="t" style="left:46px;width:800px;text-align:right;top:574.30px;font-size:13px;line-height:13px;color:#323130;font-weight:normal;font-style:italic;font-family:'Liberation Sans', sans-serif;">100</div>
<div class="t" style="left:243px;width:800px;text-align:right;top:574.30px;font-size:13px;line-height:13px;color:#323130;font-weight:normal;font-style:italic;font-family:'Liberation Sans', sans-serif;">2</div>
<div class="b" style="left:224px;top:618px;width:981px;height:1px;background:#e1dfdd;"></div>
<div class="t" style="left:-158.5px;width:800px;text-align:center;top:599.52px;font-size:14px;line-height:14px;color:#605e5c;font-weight:normal;font-style:normal;font-family:'Liberation Sans', sans-serif;">14</div>
<div class="t" style="left:-348px;width:800px;text-align:right;top:600.17px;font-size:13px;line-height:13px;color:#323130;font-weight:normal;font-style:italic;font-family:'Liberation Sans', sans-serif;">10263</div>
<div class="t" style="left:-151px;width:800px;text-align:right;top:600.17px;font-size:13px;line-height:13px;color:#323130;font-weight:normal;font-style:italic;font-family:'Liberation Sans', sans-serif;">34</div>
<div class="t" style="left:46px;width:800px;text-align:right;top:600.17px;font-size:13px;line-height:13px;color:#323130;font-weight:normal;font-style:italic;font-family:'Liberation Sans', sans-serif;">100</div>
<div class="t" style="left:243px;width:800px;text-align:right;top:600.17px;font-size:13px;line-height:13px;color:#323130;font-weight:normal;font-style:italic;font-family:'Liberation Sans', sans-serif;">2</div>
<div class="b" style="left:224px;top:644px;width:981px;height:1px;background:#e1dfdd;"></div>
<div class="t" style="left:-158.5px;width:800px;text-align:center;top:625.40px;font-size:14px;line-height:14px;color:#605e5c;font-weight:normal;font-style:normal;font-family:'Liberation Sans', sans-serif;">15</div>
<div class="t" style="left:-348px;width:800px;text-align:right;top:626.05px;font-size:13px;line-height:13px;color:#323130;font-weight:normal;font-style:italic;font-family:'Liberation Sans', sans-serif;">10275</div>
<div class="t" style="left:-151px;width:800px;text-align:right;top:626.05px;font-size:13px;line-height:13px;color:#323130;font-weight:normal;font-style:italic;font-family:'Liberation Sans', sans-serif;">45</div>
<div class="t" style="left:46px;width:800px;text-align:right;top:626.05px;font-size:13px;line-height:13px;color:#323130;font-weight:normal;font-style:italic;font-family:'Liberation Sans', sans-serif;">92.83</div>
<div class="t" style="left:243px;width:800px;text-align:right;top:626.05px;font-size:13px;line-height:13px;color:#323130;font-weight:normal;font-style:italic;font-family:'Liberation Sans', sans-serif;">1</div>
<div class="b" style="left:224px;top:670px;width:981px;height:1px;background:#e1dfdd;"></div>
<div class="t" style="left:-158.5px;width:800px;text-align:center;top:651.27px;font-size:14px;line-height:14px;color:#605e5c;font-weight:normal;font-style:normal;font-family:'Liberation Sans', sans-serif;">16</div>
<div class="t" style="left:-348px;width:800px;text-align:right;top:651.92px;font-size:13px;line-height:13px;color:#323130;font-weight:normal;font-style:italic;font-family:'Liberation Sans', sans-serif;">10285</div>
<div class="t" style="left:-151px;width:800px;text-align:right;top:651.92px;font-size:13px;line-height:13px;color:#323130;font-weight:normal;font-style:italic;font-family:'Liberation Sans', sans-serif;">36</div>
<div class="t" style="left:46px;width:800px;text-align:right;top:651.92px;font-size:13px;line-height:13px;color:#323130;font-weight:normal;font-style:italic;font-family:'Liberation Sans', sans-serif;">100</div>
<div class="t" style="left:243px;width:800px;text-align:right;top:651.92px;font-size:13px;line-height:13px;color:#323130;font-weight:normal;font-style:italic;font-family:'Liberation Sans', sans-serif;">6</div>
<div class="b" style="left:224px;top:696px;width:981px;height:1px;background:#e1dfdd;"></div>
<div class="t" style="left:-158.5px;width:800px;text-align:center;top:677.15px;font-size:14px;line-height:14px;color:#605e5c;font-weight:normal;font-style:normal;font-family:'Liberation Sans', sans-serif;">17</div>
<div class="t" style="left:-348px;width:800px;text-align:right;top:677.80px;font-size:13px;line-height:13px;color:#323130;font-weight:normal;font-style:italic;font-family:'Liberation Sans', sans-serif;">10299</div>
<div class="t" style="left:-151px;width:800px;text-align:right;top:677.80px;font-size:13px;line-height:13px;color:#323130;font-weight:normal;font-style:italic;font-family:'Liberation Sans', sans-serif;">23</div>
<div class="t" style="left:46px;width:800px;text-align:right;top:677.80px;font-size:13px;line-height:13px;color:#323130;font-weight:normal;font-style:italic;font-family:'Liberation Sans', sans-serif;">100</div>
<div class="t" style="left:243px;width:800px;text-align:right;top:677.80px;font-size:13px;line-height:13px;color:#323130;font-weight:normal;font-style:italic;font-family:'Liberation Sans', sans-serif;">9</div>
<div class="b" style="left:224px;top:722px;width:981px;height:1px;background:#e1dfdd;"></div>
<div class="t" style="left:-158.5px;width:800px;text-align:center;top:703.02px;font-size:14px;line-height:14px;color:#605e5c;font-weight:normal;font-style:normal;font-family:'Liberation Sans', sans-serif;">18</div>
<div class="b" style="left:259px;top:226px;width:1px;height:499px;background:#e1dfdd;"></div>
<div class="b" style="left:456px;top:226px;width:1px;height:499px;background:#e1dfdd;"></div>
<div class="b" style="left:653px;top:226px;width:1px;height:499px;background:#e1dfdd;"></div>
<div class="b" style="left:850px;top:226px;width:1px;height:499px;background:#e1dfdd;"></div>
<div class="b" style="left:1047px;top:226px;width:1px;height:499px;background:#e1dfdd;"></div>
<svg class="b" style="left:260px;top:228px" width="24" height="22" viewBox="0 0 24 22"><g font-family="Liberation Sans" font-size="13.4" fill="#ffffff" stroke="#ffffff" stroke-width="0.15"><text x="1.6" y="16.2">1</text><text x="7.2" y="12.2">2</text><text x="13" y="19.3">3</text></g></svg>
<div class="t" style="left:289px;top:234.09px;font-size:12.3px;line-height:12.3px;color:#ffffff;font-weight:bold;font-style:normal;font-family:'Liberation Sans', sans-serif;">ORDERNUMBER</div>
<div class="b" style="left:433px;top:230px;width:20px;height:19px;background:#fff;border:1px solid #137262;box-sizing:border-box;"></div>
<svg class="b" style="left:438px;top:236px;" width="10" height="6" viewBox="0 0 10 6"><path d="M0 0H10L5 5z" fill="#666"/></svg>
<svg class="b" style="left:457px;top:228px" width="24" height="22" viewBox="0 0 24 22"><g font-family="Liberation Sans" font-size="13.4" fill="#605e5c" stroke="#605e5c" stroke-width="0.15"><text x="1.6" y="16.2">1</text><text x="7.2" y="12.2">2</text><text x="13" y="19.3">3</text></g></svg>
<div class="t" style="left:486px;top:234.09px;font-size:12.3px;line-height:12.3px;color:#605e5c;font-weight:bold;font-style:normal;font-family:'Liberation Sans', sans-serif;">QUANTITYORDERED</div>
<div class="b" style="left:630px;top:230px;width:20px;height:19px;background:#fff;border:1px solid #c8c6c4;box-sizing:border-box;"></div>
<svg class="b" style="left:635px;top:236px;" width="10" height="6" viewBox="0 0 10 6"><path d="M0 0H10L5 5z" fill="#666"/></svg>
<svg class="b" style="left:654px;top:228px" width="24" height="22" viewBox="0 0 24 22"><g font-family="Liberation Sans" font-size="15.6" fill="#605e5c" stroke="#605e5c" stroke-width="0.5"><text x="0.6" y="16.9" textLength="18.6" lengthAdjust="spacingAndGlyphs">1.2</text></g><rect x="2.5" y="15.6" width="5.5" height="1.3" fill="#605e5c"/></svg>
<div class="t" style="left:683px;top:234.09px;font-size:12.3px;line-height:12.3px;color:#605e5c;font-weight:bold;font-style:normal;font-family:'Liberation Sans', sans-serif;">PRICEEACH</div>
<div class="b" style="left:827px;top:230px;width:20px;height:19px;background:#fff;border:1px solid #c8c6c4;box-sizing:border-box;"></div>
<svg class="b" style="left:832px;top:236px;" width="10" height="6" viewBox="0 0 10 6"><path d="M0 0H10L5 5z" fill="#666"/></svg>
<svg class="b" style="left:851px;top:228px" width="24" height="22" viewBox="0 0 24 22"><g font-family="Liberation Sans" font-size="13.4" fill="#605e5c" stroke="#605e5c" stroke-width="0.15"><text x="1.6" y="16.2">1</text><text x="7.2" y="12.2">2</text><text x="13" y="19.3">3</text></g></svg>
<div class="t" style="left:880px;top:234.09px;font-size:12.3px;line-height:12.3px;color:#605e5c;font-weight:bold;font-style:normal;font-family:'Liberation Sans', sans-serif;">ORDERLINENUMBER</div>
<div class="b" style="left:1024px;top:230px;width:20px;height:19px;background:#fff;border:1px solid #c8c6c4;box-sizing:border-box;"></div>
<svg class="b" style="left:1029px;top:236px;" width="10" height="6" viewBox="0 0 10 6"><path d="M0 0H10L5 5z" fill="#666"/></svg>
<svg class="b" style="left:1048px;top:228px" width="24" height="22" viewBox="0 0 24 22"><g font-family="Liberation Sans" font-size="15.6" fill="#605e5c" stroke="#605e5c" stroke-width="0.5"><text x="0.6" y="16.9" textLength="18.6" lengthAdjust="spacingAndGlyphs">1.2</text></g><rect x="2.5" y="15.6" width="5.5" height="1.3" fill="#605e5c"/></svg>
<div class="t" style="left:1077px;top:234.09px;font-size:12.3px;line-height:12.3px;color:#605e5c;font-weight:bold;font-style:normal;font-family:'Liberation Sans', sans-serif;">SALES</div>
<svg class="b" style="left:228px;top:230px" width="28" height="18" viewBox="0 0 28 18"><rect x="1.5" y="1.5" width="15" height="14" fill="#fff" stroke="#777" stroke-width="1"/><rect x="1" y="1" width="16" height="3" fill="#4a7fba"/><path d="M6.5 4V15M11.5 4V15M1.5 7.8H16.5M1.5 11.6H16.5" stroke="#888" stroke-width="1"/><path d="M18 12H26L22 16z" fill="#666"/></svg>
<div class="b" style="left:1184px;top:257px;width:21px;height:447px;background:#f0f0f0;"></div>
<div class="b" style="left:1185px;top:299px;width:19px;height:124px;background:#c8c8c8;"></div>
<div class="b" style="left:260px;top:704px;width:945px;height:21px;background:#f0f0f0;"></div>
<div class="b" style="left:301px;top:706px;width:153px;height:17px;background:#c8c8c8;"></div>
<svg class="b" style="left:0;top:0" width="1536" height="751" viewBox="0 0 1536 751"><g fill="#5a5a5a"><path d="M280.4 714.7L287 707.8H291.8L285.3 714.7L291.8 721.6H287Z"/><path d="M1163.7 714.7L1157.1 707.8H1152.3L1158.8 714.7L1152.3 721.6H1157.1Z"/><path d="M1195 683.2L1188 675.6V671.4L1195 678.9L1202 671.4V675.6Z"/><path d="M1195 277.3L1188 284.9V289.1L1195 281.6L1202 289.1V284.9Z"/></g></svg>
<div class="b" style="left:1210px;top:173px;width:1px;height:553px;background:#e1dfdd;"></div>
<div class="t" style="left:1225px;top:188.76px;font-size:16px;line-height:16px;color:#6e6c6a;font-weight:normal;font-style:normal;font-family:'Liberation Sans', sans-serif;">Query Settings</div>
<svg class="b" style="left:1490px;top:187px;" width="17" height="17" viewBox="0 0 17 17"><path d="M2 2L15 15M15 2L2 15" stroke="#605e5c" stroke-width="1.3"/></svg>
<svg class="b" style="left:1222px;top:232px;" width="9" height="8" viewBox="0 0 9 8"><path d="M8 0V7H0z" fill="#444"/></svg>
<div class="t" style="left:1240px;top:229.93px;font-size:13.2px;line-height:13.2px;color:#3b3a39;font-weight:bold;font-style:normal;font-family:'Liberation Sans', sans-serif;">PROPERTIES</div>
<div class="t" style="left:1240px;top:253.75px;font-size:14px;line-height:14px;color:#3b3a39;font-weight:normal;font-style:normal;font-family:'Liberation Sans', sans-serif;">Name</div>
<div class="b" style="left:1240px;top:272px;width:268px;height:27px;background:#fff;border:1px solid #c8c6c4;box-sizing:border-box;"></div>
<div class="t" style="left:1247px;top:280.37px;font-size:13.5px;line-height:13.5px;color:#4a4846;font-weight:normal;font-style:normal;font-family:'Liberation Sans', sans-serif;">Sales Data</div>
<div class="t" style="left:1240px;top:311.35px;font-size:14px;line-height:14px;color:#217d70;font-weight:normal;font-style:normal;font-family:'Liberation Sans', sans-serif;">All Properties</div>
<svg class="b" style="left:1222px;top:356px;" width="9" height="8" viewBox="0 0 9 8"><path d="M8 0V7H0z" fill="#444"/></svg>
<div class="t" style="left:1240px;top:354.24px;font-size:13.3px;line-height:13.3px;color:#3b3a39;font-weight:bold;font-style:normal;font-family:'Liberation Sans', sans-serif;">APPLIED STEPS</div>
<div class="b" style="left:1240px;top:377px;width:268px;height:317px;background:transparent;border:1px solid #c8c6c4;border-right:2px solid #d0cfcd;box-sizing:border-box;"></div>
<div class="t" style="left:1268px;top:383.50px;font-size:14.3px;line-height:14.3px;color:#3b3a39;font-weight:normal;font-style:normal;font-family:'Liberation Sans', sans-serif;">Source</div>
<div class="t" style="left:1268px;top:408.03px;font-size:14.5px;line-height:14.5px;color:#3b3a39;font-weight:normal;font-style:normal;font-family:'Liberation Sans', sans-serif;">Promoted Headers</div>
<div class="b" style="left:1241px;top:427.5px;width:266px;height:24px;background:#d0cfcd;"></div>
<div class="b" style="left:1241px;top:427.5px;width:3px;height:24px;background:#117865;"></div>
<svg class="b" style="left:1249px;top:433px;" width="14" height="14" viewBox="0 0 14 14"><path d="M1.5 1.8L12 12.2M12 1.8L1.5 12.2" stroke="#6e6c6a" stroke-width="1.9"/></svg>
<div class="t" style="left:1268px;top:432.73px;font-size:14.5px;line-height:14.5px;color:#3b3a39;font-weight:normal;font-style:normal;font-family:'Liberation Sans', sans-serif;">Changed Type</div>
<svg class="b" style="left:1484px;top:384px;" width="14" height="14" viewBox="0 0 14 14"><g fill="#b3b0ad"><circle cx="7" cy="7" r="4.6"/><rect x="5.6" y="0" width="2.8" height="7" transform="rotate(0 7 7)"/><rect x="5.6" y="0" width="2.8" height="7" transform="rotate(60 7 7)"/><rect x="5.6" y="0" width="2.8" height="7" transform="rotate(120 7 7)"/><rect x="5.6" y="0" width="2.8" height="7" transform="rotate(180 7 7)"/><rect x="5.6" y="0" width="2.8" height="7" transform="rotate(240 7 7)"/><rect x="5.6" y="0" width="2.8" height="7" transform="rotate(300 7 7)"/></g><circle cx="7" cy="7" r="1.9" fill="#f3f2f1"/></svg>
<svg class="b" style="left:1484px;top:408px;" width="14" height="14" viewBox="0 0 14 14"><g fill="#b3b0ad"><circle cx="7" cy="7" r="4.6"/><rect x="5.6" y="0" width="2.8" height="7" transform="rotate(0 7 7)"/><rect x="5.6" y="0" width="2.8" height="7" transform="rotate(60 7 7)"/><rect x="5.6" y="0" width="2.8" height="7" transform="rotate(120 7 7)"/><rect x="5.6" y="0" width="2.8" height="7" transform="rotate(180 7 7)"/><rect x="5.6" y="0" width="2.8" height="7" transform="rotate(240 7 7)"/><rect x="5.6" y="0" width="2.8" height="7" transform="rotate(300 7 7)"/></g><circle cx="7" cy="7" r="1.9" fill="#f3f2f1"/></svg>
<svg class="b" style="left:0;top:0" width="1536" height="180" viewBox="0 0 1536 180"><path d="M29.5 71H14.5V107.5H29.5" fill="none" stroke="#8a8886" stroke-width="1.2"/><rect x="15" y="71.5" width="29" height="36" fill="#fff"/><path d="M29.5 71.5H14.5V107.5H29.5" fill="none" stroke="#8a8886" stroke-width="1.2"/><rect x="17" y="73.5" width="6.5" height="3" fill="#777"/><rect x="16.5" y="78" width="7" height="18" fill="#fde9a6"/><path d="M25.5 73.5H29.5V85.5H39L31 96H25.5Z" fill="#fde9a6"/><rect x="17" y="98" width="12" height="7" fill="#7a7a7a"/><path d="M41.5 85V92" stroke="#888" stroke-width="1"/><path d="M32.5 72L43 82.5M43 72L32.5 82.5" stroke="#d13438" stroke-width="2.3"/><path d="M37.5 108V95.5M31.5 101.5L37.5 95.5L43.5 101.5" fill="none" stroke="#3f7ebf" stroke-width="2.6"/><path d="M80.5 72.5H96.5L104.5 80.5V104.5H80.5Z" fill="#fff" stroke="#8a8886" stroke-width="1"/><path d="M96.5 72.5V80.5H104.5" fill="none" stroke="#8a8886" stroke-width="1"/><path d="M96 90V106a7.5 2.5 0 0 0 15 0V90Z" fill="#ecc87a"/><ellipse cx="103.5" cy="90" rx="7.5" ry="2.6" fill="#ecc87a"/><path d="M96 91.3a7.5 2.5 0 0 0 15 0" fill="none" stroke="#fff" stroke-width=".8"/><path d="M135.5 73.5H151.5L159.5 81.5V105.5H135.5Z" fill="#fff" stroke="#8a8886" stroke-width="1"/><path d="M151.5 73.5V81.5H159.5" fill="none" stroke="#8a8886" stroke-width="1"/><circle cx="158.3" cy="99.4" r="8.8" fill="#fff" stroke="#5b8fc9" stroke-width="1.1"/><path d="M158.5 93.5V99.5H163.5" fill="none" stroke="#777" stroke-width="1"/><rect x="186.5" y="74.5" width="33" height="29" fill="#fff" stroke="#8a8886" stroke-width="1"/><rect x="186" y="74" width="34" height="6" fill="#4a7fba"/><path d="M197.5 80V103" stroke="#8a8886" stroke-width="1"/><path d="M208.5 80V103" stroke="#8a8886" stroke-width="1"/><path d="M186 86.5H219" stroke="#8a8886" stroke-width="1"/><path d="M186 92.5H219" stroke="#8a8886" stroke-width="1"/><path d="M186 97.5H219" stroke="#8a8886" stroke-width="1"/><path d="M264.5 72.5H280.5L288.5 80.5V104.5H264.5Z" fill="#fff" stroke="#8a8886" stroke-width="1"/><path d="M280.5 72.5V80.5H288.5" fill="none" stroke="#8a8886" stroke-width="1"/><g fill="#e8873a"><circle cx="284.3" cy="97.9" r="7"/><rect x="282.0" y="87.9" width="4.6" height="10" transform="rotate(90.0 284.3 97.9)"/><rect x="282.0" y="87.9" width="4.6" height="10" transform="rotate(150.0 284.3 97.9)"/><rect x="282.0" y="87.9" width="4.6" height="10" transform="rotate(210.0 284.3 97.9)"/><rect x="282.0" y="87.9" width="4.6" height="10" transform="rotate(270.0 284.3 97.9)"/><rect x="282.0" y="87.9" width="4.6" height="10" transform="rotate(330.0 284.3 97.9)"/><rect x="282.0" y="87.9" width="4.6" height="10" transform="rotate(390.0 284.3 97.9)"/></g><circle cx="284.3" cy="97.9" r="2.6" fill="#fff"/><rect x="352.5" y="72.5" width="26" height="33.5" fill="#fff" stroke="#8a8886" stroke-width="1.2"/><path d="M355 75.8H361.5" stroke="#999" stroke-width="1.1"/><rect x="365.5" y="75.5" width="9.5" height="6" fill="none" stroke="#4a7fba" stroke-width="1.1"/><path d="M355 85.6H361.5" stroke="#999" stroke-width="1.1"/><rect x="365.5" y="85.3" width="9.5" height="6" fill="none" stroke="#4a7fba" stroke-width="1.1"/><path d="M355 95.6H361.5" stroke="#999" stroke-width="1.1"/><rect x="365.5" y="95.3" width="9.5" height="6" fill="none" stroke="#4a7fba" stroke-width="1.1"/><path d="M433.5 72.5H449.5L457.5 80.5V104.5H433.5Z" fill="#fff" stroke="#8a8886" stroke-width="1"/><path d="M449.5 72.5V80.5H457.5" fill="none" stroke="#8a8886" stroke-width="1"/><circle cx="457" cy="100" r="9.5" fill="#fff"/><path d="M449.5 99.5A7.5 7.5 0 0 1 464.3 98" fill="none" stroke="#6aa594" stroke-width="2.6"/><path d="M461 95.5L466.5 92V99.5H459Z" fill="#6aa594"/><path d="M464.5 100.5A7.5 7.5 0 0 1 449.7 102" fill="none" stroke="#6aa594" stroke-width="2.6"/><path d="M453 104.5L447.5 108V100.5H455Z" fill="#6aa594"/><path d="M479.5 71.5H486.5L490.5 75.5V86.5H479.5Z" fill="#fff" stroke="#8a8886" stroke-width="1"/><path d="M486.5 71.5V75.5H490.5" fill="none" stroke="#8a8886" stroke-width="1"/><path d="M481 75.5h2M484 75.5h3M481 79.5h2M484 79.5h3" stroke="#aaa" stroke-width="1"/><rect x="488.5" y="79.5" width="10" height="8" fill="#fff" stroke="#8a8886" stroke-width="1"/><rect x="488" y="79" width="11" height="3" fill="#4a7fba"/><path d="M491.5 82V87" stroke="#8a8886" stroke-width="1"/><path d="M495.5 82V87" stroke="#8a8886" stroke-width="1"/><path d="M488 84.5H498" stroke="#8a8886" stroke-width="1"/><path d="M481.5 96.5H489.5L494.5 101.5V113.5H481.5Z" fill="#fff" stroke="#8a8886" stroke-width="1"/><path d="M489.5 96.5V101.5H494.5" fill="none" stroke="#8a8886" stroke-width="1"/><path d="M488.5 104.5H497.5V114.5H488.5Z" fill="#fff" stroke="#777" stroke-width="1"/><path d="M490.5 107.5h5M490.5 110h5" stroke="#999" stroke-width="1"/><rect x="488" y="112.5" width="6" height="2" fill="#555"/><rect x="480.5" y="122.5" width="16" height="15" fill="#fff" stroke="#8a8886" stroke-width="1"/><rect x="480" y="122" width="17" height="3" fill="#4a7fba"/><path d="M485.5 125V137" stroke="#8a8886" stroke-width="1"/><path d="M491.5 125V137" stroke="#8a8886" stroke-width="1"/><path d="M480 129.5H496" stroke="#8a8886" stroke-width="1"/><path d="M480 133.5H496" stroke="#8a8886" stroke-width="1"/><rect x="625.5" y="73.5" width="33" height="30" fill="#fff" stroke="#8a8886" stroke-width="1.2"/><rect x="626" y="74" width="22" height="29" fill="#c3d5ea"/><path d="M636.5 74V103" stroke="#999" stroke-width="1"/><path d="M647.5 74V103" stroke="#999" stroke-width="1"/><path d="M626 79.5H658" stroke="#999" stroke-width="1"/><path d="M626 85.5H658" stroke="#999" stroke-width="1"/><path d="M626 91.5H658" stroke="#999" stroke-width="1"/><path d="M626 97.5H658" stroke="#999" stroke-width="1"/><path d="M694.5 73.5V84.5H719.5V73.5" fill="#fff" stroke="#8a8886" stroke-width="1.2"/><path d="M702 73.5H711.5V88L706.75 93L702 88Z" fill="#c3d5ea" stroke="#b0b0b0" stroke-width="1"/><path d="M697.5 89.5Q707 96 716.5 108M716.5 91Q705 98 697.5 107.5" fill="none" stroke="#d9583b" stroke-width="2.6" stroke-linecap="round"/><rect x="756" y="71.5" width="36" height="10.5" fill="#4a7fba"/><rect x="756.5" y="85.5" width="35" height="20" fill="#fff" stroke="#8a8886" stroke-width="1.2"/><path d="M768.5 86V105M779.5 86V105M756 95.5H792" stroke="#8a8886" stroke-width="1"/><rect x="806" y="71.5" width="36" height="10.5" fill="#4a7fba"/><rect x="806.5" y="85.5" width="35" height="20" fill="#fff" stroke="#8a8886" stroke-width="1.2"/><path d="M818.5 86V105M829.5 86V105M806 95.5H842" stroke="#8a8886" stroke-width="1"/><path d="M776.5 78L782.5 84.5L792.5 72" fill="none" stroke="#fff" stroke-width="5"/><path d="M776.5 78L782.5 84.5L792.5 72" fill="none" stroke="#6aa594" stroke-width="2.6"/><path d="M829 72L841.5 84M841.5 72L829 84" stroke="#fff" stroke-width="4.5"/><path d="M829 72L841.5 84M841.5 72L829 84" stroke="#d9583b" stroke-width="2.3"/><text x="871" y="79.5" text-anchor="middle" font-family="Liberation Sans" font-size="11.5" fill="#4a7fba" stroke="#4a7fba" stroke-width=".3">A</text><text x="871" y="88.3" text-anchor="middle" font-family="Liberation Sans" font-size="11" fill="#8a4fb5" stroke="#8a4fb5" stroke-width=".3">Z</text><text x="871" y="104" text-anchor="middle" font-family="Liberation Sans" font-size="11" fill="#8a4fb5" stroke="#8a4fb5" stroke-width=".3">Z</text><text x="871" y="114" text-anchor="middle" font-family="Liberation Sans" font-size="11.5" fill="#4a7fba" stroke="#4a7fba" stroke-width=".3">A</text><path d="M879.6 71V88M876.5 84.5L879.6 88L882.7 84.5M879.6 96.5V113.5M876.5 110L879.6 113.5L882.7 110" fill="none" stroke="#777" stroke-width="1.1"/><path d="M910.5 107V89.5H919M936 89.5H944.5V107" fill="none" stroke="#8a8886" stroke-width="1.2"/><rect x="911" y="90" width="8" height="17" fill="#fff"/><rect x="936" y="90" width="8" height="17" fill="#fff"/><rect x="920" y="76" width="4" height="31" fill="#c3d5ea" stroke="#b8b8b8" stroke-width=".8"/><rect x="930.5" y="76" width="4" height="31" fill="#c3d5ea" stroke="#b8b8b8" stroke-width=".8"/><path d="M923.8 71.5H930.4L927.1 75Z" fill="#3e7bbf"/><rect x="964" y="78" width="24.5" height="7.5" fill="#fff" stroke="#8a8886" stroke-width="1.2"/><rect x="973.5" y="92.5" width="25" height="8" fill="#fff" stroke="#8a8886" stroke-width="1.2"/><path d="M982 85.5L988 92.5" stroke="#666" stroke-width="1"/><rect x="1010.5" y="97.5" width="16" height="15" fill="#fff" stroke="#8a8886" stroke-width="1"/><rect x="1010" y="97" width="17" height="3" fill="#4a7fba"/><path d="M1014.5 100V112" stroke="#8a8886" stroke-width="1"/><path d="M1018.5 100V112" stroke="#8a8886" stroke-width="1"/><path d="M1022.5 100V112" stroke="#8a8886" stroke-width="1"/><path d="M1010 102.5H1026" stroke="#8a8886" stroke-width="1"/><path d="M1010 105.5H1026" stroke="#8a8886" stroke-width="1"/><path d="M1010 107.5H1026" stroke="#8a8886" stroke-width="1"/><path d="M1010 110.5H1026" stroke="#8a8886" stroke-width="1"/><text x="1012" y="129.3" text-anchor="middle" font-family="Liberation Sans" font-size="10" fill="#444">1</text><text x="1024.5" y="138.5" text-anchor="middle" font-family="Liberation Sans" font-size="10" fill="#444">2</text><path d="M1012 131.5Q1012.5 136 1019 135.5" fill="none" stroke="#3e7bbf" stroke-width="1.8"/><path d="M1017 132.5L1020.5 135.5L1017 138.5" fill="none" stroke="#3e7bbf" stroke-width="1.6"/><rect x="1209.5" y="71.5" width="12" height="11" fill="#fff" stroke="#8a8886" stroke-width="1"/><rect x="1209" y="71" width="13" height="3" fill="#4a7fba"/><path d="M1213.5 74V82" stroke="#8a8886" stroke-width="1"/><path d="M1217.5 74V82" stroke="#8a8886" stroke-width="1"/><path d="M1209 77.5H1221" stroke="#8a8886" stroke-width="1"/><path d="M1209 79.5H1221" stroke="#8a8886" stroke-width="1"/><rect x="1214.5" y="77.5" width="12" height="11" fill="#fff" stroke="#8a8886" stroke-width="1"/><rect x="1214" y="77" width="13" height="3" fill="#4a7fba"/><path d="M1218.5 80V88" stroke="#8a8886" stroke-width="1"/><path d="M1222.5 80V88" stroke="#8a8886" stroke-width="1"/><path d="M1214 83.5H1226" stroke="#8a8886" stroke-width="1"/><path d="M1214 85.5H1226" stroke="#8a8886" stroke-width="1"/><path d="M1210 83Q1210 87 1215 86.5" fill="none" stroke="#3e7bbf" stroke-width="1.8"/><path d="M1213 84L1216 86.5L1213 89" fill="none" stroke="#3e7bbf" stroke-width="1.5"/><rect x="1209" y="96" width="17" height="1.8" fill="#4a7fba"/><rect x="1209.5" y="97.5" width="16" height="3.5" fill="#fff" stroke="#777" stroke-width="1"/><path d="M1214.5 97.5V101M1220.5 97.5V101" stroke="#777" stroke-width="1"/><rect x="1209.5" y="110" width="16" height="3.5" fill="#fff" stroke="#777" stroke-width="1"/><path d="M1214.5 110V113.5M1220.5 110V113.5" stroke="#777" stroke-width="1"/><path d="M1217.5 102V109M1215.5 104L1217.5 102L1219.5 104M1215.5 107L1217.5 109L1219.5 107" fill="none" stroke="#4a7fba" stroke-width="1"/><rect x="1209.5" y="122" width="16" height="16.5" fill="#eef3fa" stroke="#a9c4e5" stroke-width="1"/><path d="M1214.5 124V133M1212 130.5L1214.5 133L1217 130.5M1220.5 124V133M1218 130.5L1220.5 133L1223 130.5M1212 135.5H1223" fill="none" stroke="#9db6d6" stroke-width="1"/><path d="M1354 71H1370.5M1354 76.1H1370.5M1356.5 81.2H1373M1354 86.1H1370.5" stroke="#8a8886" stroke-width="1.3"/><path d="M1354.5 104.7Q1363.2 94 1372 104.7Q1363.2 115.4 1354.5 104.7Z" fill="none" stroke="#555" stroke-width="1.4"/><circle cx="1363.2" cy="104.7" r="3.3" fill="none" stroke="#555" stroke-width="1.4"/><circle cx="1363.2" cy="104.7" r="1.1" fill="#555"/><path d="M1360.5 121.5V129L1354.5 139H1371.5L1365.5 129V121.5Z" fill="#fff" stroke="#555" stroke-width="1.4" stroke-linejoin="round"/><path d="M1358.2 132.8H1367.8L1371.5 139H1354.5Z" fill="#fff" stroke="#555" stroke-width="1.2"/></svg>
<div class="b" style="left:0px;top:725px;width:1536px;height:1px;background:#e1dfdd;"></div>
<div class="b" style="left:0px;top:726px;width:1536px;height:25px;background:#f3f2f1;"></div>
<div class="t" style="left:3px;top:732.28px;font-size:14.2px;line-height:14.2px;color:#484644;font-weight:normal;font-style:normal;font-family:'Liberation Sans', sans-serif;transform:scaleX(0.9);transform-origin:0 0;">25 COLUMNS, 999+ ROWS</div>
<div class="t" style="left:182px;top:732.87px;font-size:13.5px;line-height:13.5px;color:#484644;font-weight:normal;font-style:normal;font-family:'Liberation Sans', sans-serif;">Column profiling based on top 1000 rows</div>
<div class="t" style="left:731px;width:800px;text-align:right;top:732.28px;font-size:14.2px;line-height:14.2px;color:#484644;font-weight:normal;font-style:normal;font-family:'Liberation Sans', sans-serif;transform:scaleX(0.887);transform-origin:100% 0;">PREVIEW DOWNLOADED AT 20:15</div>
</body></html>
